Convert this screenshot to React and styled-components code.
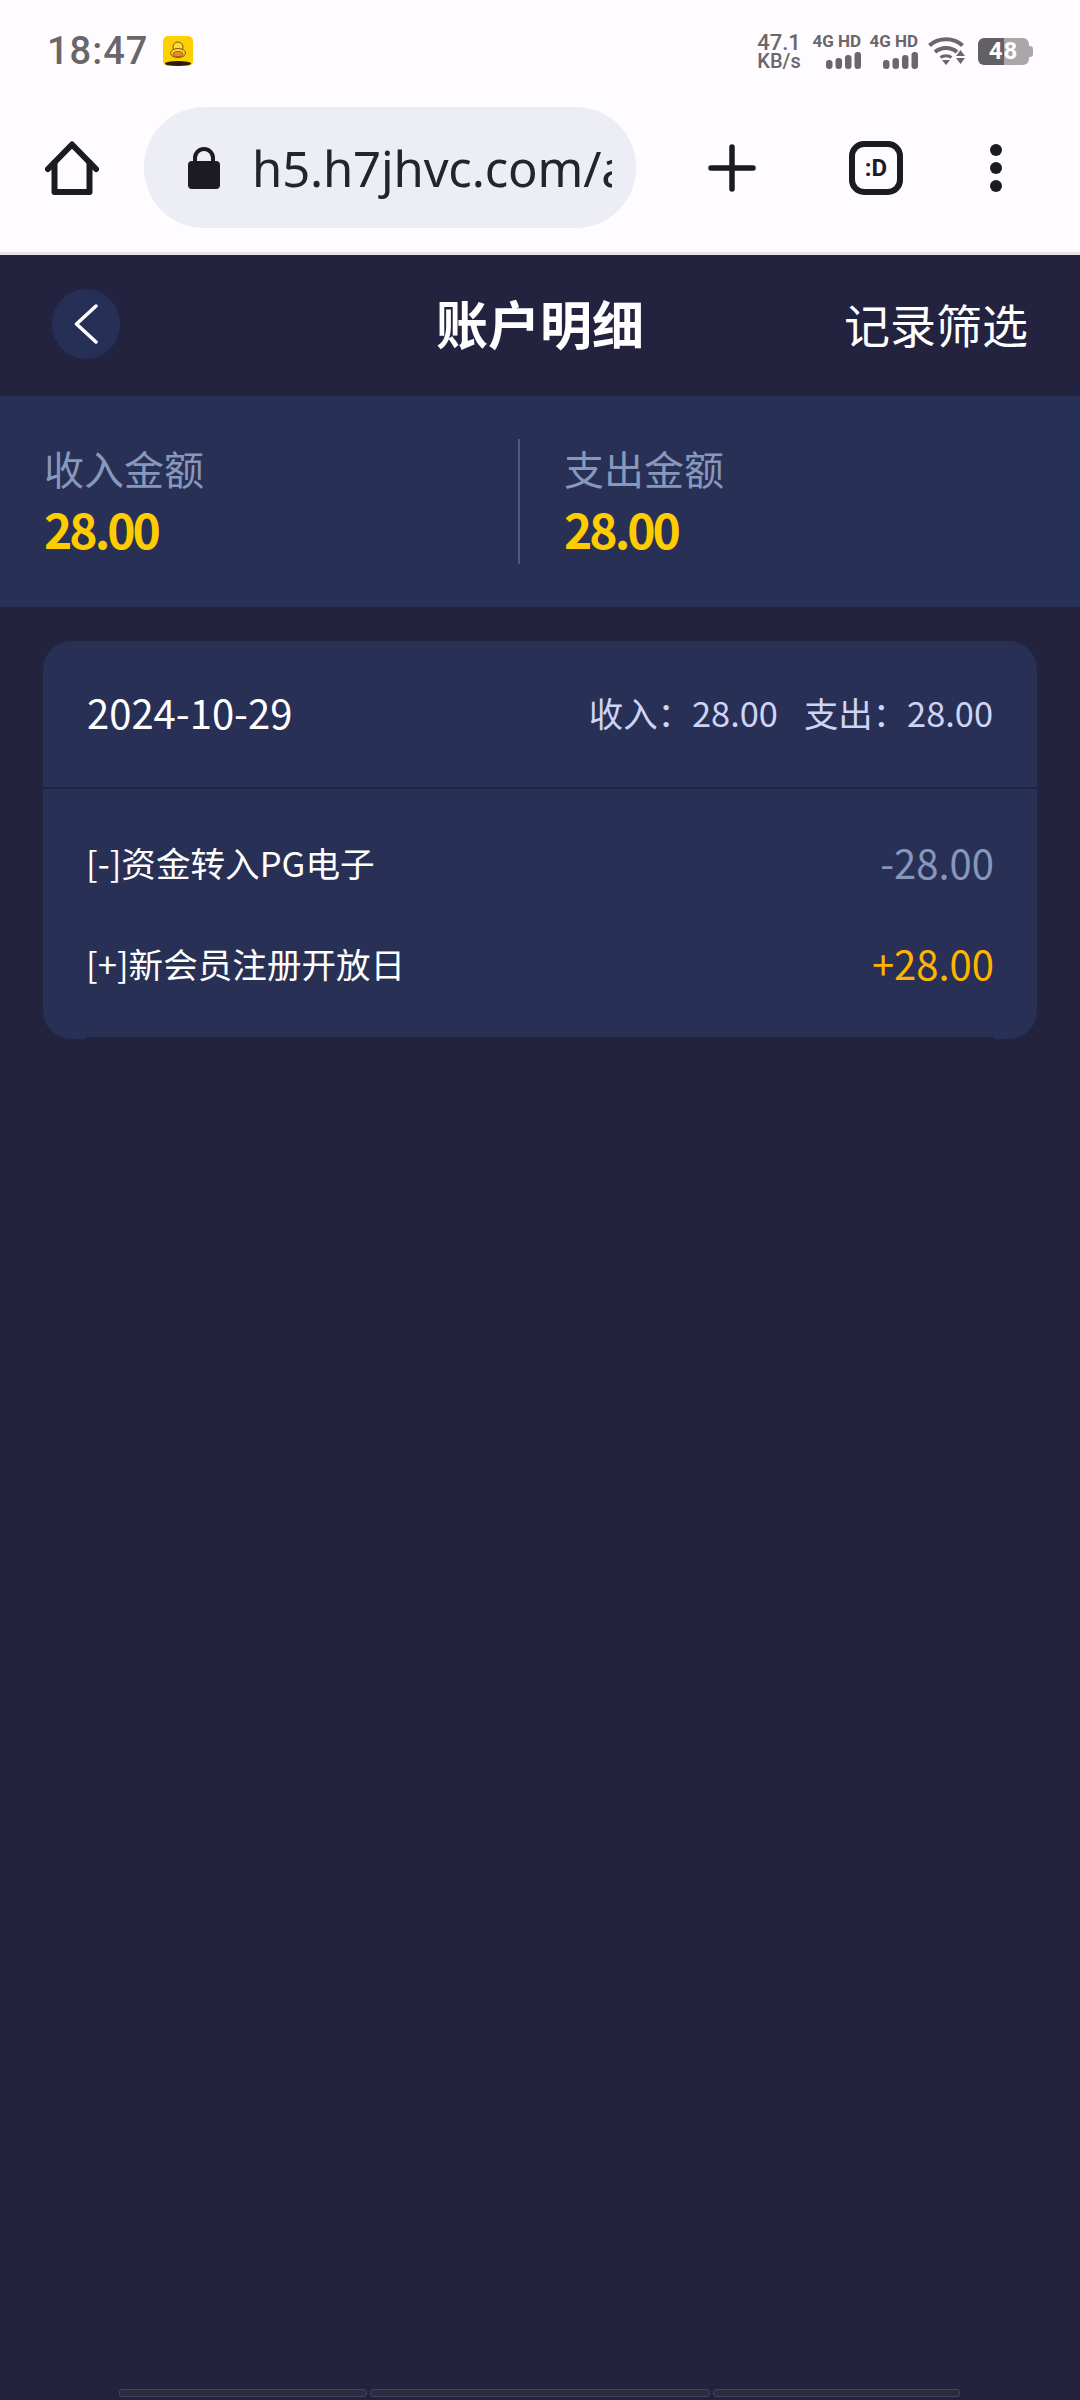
import styled, { createGlobalStyle } from "styled-components";

const cjk = `"Noto Sans CJK SC", "Noto Sans", sans-serif`;

const GlobalStyle = createGlobalStyle`
  html, body {
    margin: 0;
    padding: 0;
    background: #232340;
  }
  * {
    box-sizing: border-box;
  }
`;

const Page = styled.div`
  width: 1080px;
  height: 2400px;
  display: flex;
  flex-direction: column;
  background: #232340;
  font-family: ${cjk};
  overflow: hidden;
`;

const BrowserChrome = styled.div`
  height: 255px;
  background: #fefcff;
  border-bottom: 3px solid #e6e4ea;
  display: flex;
  flex-direction: column;
`;

const StatusBar = styled.div`
  height: 102px;
  padding: 0 51px 0 47px;
  display: flex;
  align-items: center;
  justify-content: space-between;
  font-family: Roboto, sans-serif;
  color: #6a666a;
`;

const StatusLeft = styled.div`
  display: flex;
  align-items: center;
  gap: 15px;
`;

const Clock = styled.span`
  font-size: 38px;
  font-weight: 500;
  letter-spacing: 1px;
`;

const StatusRight = styled.div`
  display: flex;
  align-items: center;
`;

const Speed = styled.div`
  width: 44px;
  display: flex;
  flex-direction: column;
  align-items: center;
  font-size: 20px;
  line-height: 18px;
  font-weight: 500;
  margin-right: 13px;

  b {
    font-size: 22px;
    line-height: 19px;
    font-weight: 500;
  }
`;

const Signal = styled.div`
  width: 47px;
  margin-right: 10px;
  display: flex;
  flex-direction: column;
  align-items: flex-end;
  gap: 3px;
  font-size: 17px;
  line-height: 15px;
  font-weight: 700;
  white-space: nowrap;
`;

const Battery = styled.div`
  width: 51px;
  height: 27px;
  margin-left: 12px;
  border-radius: 6px;
  background: linear-gradient(90deg, #636063 50%, #a9a7a9 50%);
  color: #fff;
  display: flex;
  align-items: center;
  justify-content: center;
  font-size: 24px;
  font-weight: 700;
  letter-spacing: 1px;
  position: relative;

  &::after {
    content: "";
    position: absolute;
    right: -4px;
    top: 8px;
    width: 4px;
    height: 11px;
    border-radius: 0 3px 3px 0;
    background: #a9a7a9;
  }
`;

const Toolbar = styled.div`
  padding: 5px 0 0 45px;
  display: flex;
  align-items: center;
`;

const ToolSlot = styled.div`
  margin-left: ${({ $gap }) => $gap}px;
  display: flex;
  height: 121px;
  align-items: center;
`;

const UrlPill = styled.div`
  width: 492px;
  height: 121px;
  margin-left: 45px;
  border-radius: 60px;
  background: #edeef5;
  padding: 0 24px 0 44px;
  display: flex;
  align-items: center;
  gap: 32px;
`;

const UrlText = styled.div`
  flex: 1;
  overflow: hidden;
  white-space: nowrap;
  font-family: "Noto Sans", sans-serif;
  font-size: 49px;
  letter-spacing: -0.15px;
  color: #24242c;
`;

const DotsColumn = styled.div`
  display: flex;
  flex-direction: column;
  gap: 6px;
`;

const Dot = styled.span`
  width: 12px;
  height: 12px;
  border-radius: 50%;
  background: #1b1b21;
`;

const FaceIcon = styled.div`
  width: 54px;
  height: 54px;
  border: 6px solid #1b1b21;
  border-radius: 15px;
  display: flex;
  align-items: center;
  justify-content: center;
  font-family: Roboto, sans-serif;
  font-size: 24px;
  font-weight: 700;
  color: #1b1b21;
`;

const Header = styled.header`
  height: 141px;
  padding: 0 52px;
  display: flex;
  align-items: center;
  color: #fff;
`;

const BackButton = styled.div`
  width: 68px;
  height: 70px;
  border-radius: 50%;
  background: #263056;
  display: flex;
  align-items: center;
  justify-content: center;
  margin-top: -4px;
`;

const Title = styled.h1`
  flex: 1;
  margin: -6px 0 0;
  padding-left: 116px;
  text-align: center;
  font-size: 52px;
  font-weight: 700;
`;

const FilterLink = styled.span`
  font-size: 46px;
  margin-top: -6px;
`;

const Summary = styled.section`
  height: 211px;
  background: #283055;
  display: flex;
  align-items: center;
`;

const SummaryItem = styled.div`
  height: 125px;
  padding: 2px 0 0 44px;
  width: 520px;
  display: flex;
  flex-direction: column;
  border-right: ${({ $divided }) => ($divided ? "2px solid #4c5a85" : "none")};
`;

const SummaryLabel = styled.div`
  font-size: 40px;
  line-height: 54px;
  color: #8898bd;
`;

const SummaryValue = styled.div`
  margin-top: 5px;
  font-size: 48px;
  line-height: 56px;
  font-weight: 700;
  color: #ffcc00;
  letter-spacing: -3px;
`;

const Card = styled.section`
  margin: 34px 43px 0;
  background: #283055;
  border-radius: 28px;
`;

const CardHead = styled.div`
  height: 148px;
  padding: 0 44px 4px;
  display: flex;
  align-items: center;
  justify-content: space-between;
  border-bottom: 2px solid #1f2444;
`;

const DateText = styled.span`
  font-size: 40px;
  color: #fff;
`;

const Totals = styled.div`
  display: flex;
  gap: 26px;
  font-size: 34.4px;
  color: #cdd4f5;
`;

const RowList = styled.div`
  margin: 0 43px;
  padding: 22px 0 24px;
  border-bottom: 2px solid #232340;
`;

const Row = styled.div`
  height: 101px;
  display: flex;
  align-items: center;
  justify-content: space-between;
`;

const RowLabel = styled.span`
  font-size: 34.6px;
  color: #fff;
`;

const RowAmount = styled.span`
  font-size: 40px;
  color: ${({ $income }) => ($income ? "#ffb400" : "#8696bc")};
`;

const HomeBar = styled.div`
  margin: auto 120px 3px 119px;
  display: flex;
  gap: 3px;
`;

const HomeSegment = styled.div`
  flex: ${({ $grow }) => $grow};
  height: 8px;
  background: #2c2b3f;
  border: 1px solid #44445a;
  border-radius: 3px;
`;

function DuckIcon() {
  return (
    <svg width="30" height="30" viewBox="0 0 30 30">
      <rect width="30" height="30" rx="5" fill="#ffd000" />
      <circle cx="15" cy="11" r="5" fill="#ffd83a" stroke="#5a3a10" strokeWidth="0.8" />
      <ellipse cx="15" cy="17" rx="7.5" ry="4.5" fill="#ffd83a" stroke="#5a3a10" strokeWidth="0.8" />
      <ellipse cx="15" cy="18" rx="5" ry="2.6" fill="#f28a1e" stroke="#5a3a10" strokeWidth="0.6" />
      <ellipse cx="15" cy="27.5" rx="13" ry="2.5" fill="#2a1d0c" />
    </svg>
  );
}

function SignalBars() {
  return (
    <svg width="35" height="17" viewBox="0 0 35 17" fill="#6a666a">
      <rect x="0" y="8" width="6.5" height="9" rx="3" />
      <rect x="9.5" y="6" width="6.5" height="11" rx="3" />
      <rect x="19" y="3" width="6.5" height="14" rx="3" />
      <rect x="28.5" y="0" width="6.5" height="17" rx="3" />
    </svg>
  );
}

function WifiIcon() {
  return (
    <svg width="38" height="30" viewBox="0 0 38 30" fill="none" stroke="#6a666a" strokeWidth="4">
      <path d="M1.5 9.5C10 1 26 1 34.5 9.5" />
      <path d="M7 16C13 10.5 23 10.5 29 16" />
      <path d="M12.5 21.5C15.5 19 20.5 19 23.5 21.5" strokeWidth="3" />
      <path d="M14 24h8l-4 5z" fill="#6a666a" stroke="none" />
      <path d="M32.5 14l4.5 6h-9z M28 22h9l-4.5 6z" fill="#6a666a" stroke="none" />
    </svg>
  );
}

function HomeIcon() {
  return (
    <svg width="54" height="54" viewBox="0 0 54 54" fill="none" stroke="#1b1b21" strokeWidth="6" strokeLinejoin="round" strokeLinecap="round">
      <path d="M3 28L27 3.5L51 28" />
      <path d="M9.5 22V51H44.5V22" />
    </svg>
  );
}

function LockIcon() {
  return (
    <svg width="32" height="42" viewBox="0 0 32 42">
      <path d="M7 16V11a9 9 0 0 1 18 0v5" fill="none" stroke="#1b1b21" strokeWidth="4" />
      <rect x="0" y="14" width="32" height="28" rx="4" fill="#1b1b21" />
    </svg>
  );
}

function PlusIcon() {
  return (
    <svg width="48" height="48" viewBox="0 0 48 48" stroke="#1b1b21" strokeWidth="5.5" strokeLinecap="round">
      <path d="M24 3V45M3 24H45" />
    </svg>
  );
}

function BackIcon() {
  return (
    <svg width="24" height="40" viewBox="0 0 24 40" fill="none" stroke="#fff" strokeWidth="3.5" strokeLinecap="round" strokeLinejoin="round">
      <path d="M22 2L2.5 20L22 38" />
    </svg>
  );
}

export default function App() {
  return (
    <Page>
      <GlobalStyle />
      <BrowserChrome>
        <StatusBar>
          <StatusLeft>
            <Clock>18:47</Clock>
            <DuckIcon />
          </StatusLeft>
          <StatusRight>
            <Speed>
              <b>47.1</b>
              KB/s
            </Speed>
            <Signal>
              4G HD
              <SignalBars />
            </Signal>
            <Signal>
              4G HD
              <SignalBars />
            </Signal>
            <WifiIcon />
            <Battery>48</Battery>
          </StatusRight>
        </StatusBar>
        <Toolbar>
          <HomeIcon />
          <UrlPill>
            <LockIcon />
            <UrlText>h5.h7jhvc.com/account</UrlText>
          </UrlPill>
          <ToolSlot $gap={72}>
            <PlusIcon />
          </ToolSlot>
          <ToolSlot $gap={93}>
            <FaceIcon>:D</FaceIcon>
          </ToolSlot>
          <ToolSlot $gap={87}>
            <DotsColumn>
              <Dot />
              <Dot />
              <Dot />
            </DotsColumn>
          </ToolSlot>
        </Toolbar>
      </BrowserChrome>

      <Header>
        <BackButton>
          <BackIcon />
        </BackButton>
        <Title>账户明细</Title>
        <FilterLink>记录筛选</FilterLink>
      </Header>

      <Summary>
        <SummaryItem $divided>
          <SummaryLabel>收入金额</SummaryLabel>
          <SummaryValue>28.00</SummaryValue>
        </SummaryItem>
        <SummaryItem>
          <SummaryLabel>支出金额</SummaryLabel>
          <SummaryValue>28.00</SummaryValue>
        </SummaryItem>
      </Summary>

      <Card>
        <CardHead>
          <DateText>2024-10-29</DateText>
          <Totals>
            <span>收入：28.00</span>
            <span>支出：28.00</span>
          </Totals>
        </CardHead>
        <RowList>
          <Row>
            <RowLabel>[-]资金转入PG电子</RowLabel>
            <RowAmount>-28.00</RowAmount>
          </Row>
          <Row>
            <RowLabel>[+]新会员注册开放日</RowLabel>
            <RowAmount $income>+28.00</RowAmount>
          </Row>
        </RowList>
      </Card>

      <HomeBar>
        <HomeSegment $grow={247} />
        <HomeSegment $grow={341} />
        <HomeSegment $grow={246} />
      </HomeBar>
    </Page>
  );
}
